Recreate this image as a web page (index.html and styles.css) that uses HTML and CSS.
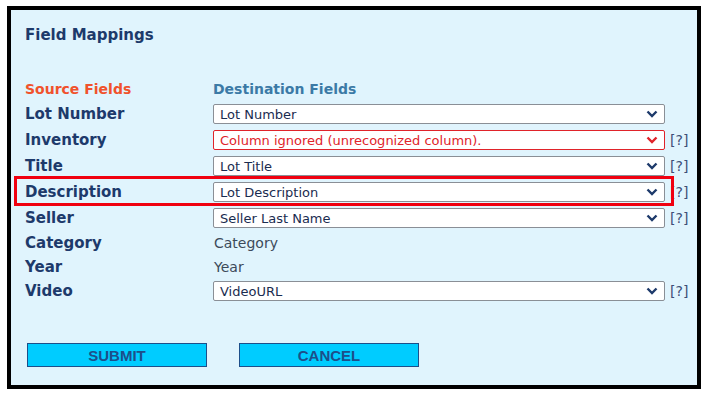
FILE: index.html
```html
<!DOCTYPE html>
<html lang="en">
<head>
    <meta charset="UTF-8">
    <title>Field Mappings</title>
    <link rel="stylesheet" href="styles.css">
</head>
<body>
    <div class="mapping-panel">
        <h2 class="panel-title">Field Mappings</h2>

        <div class="mapping-head">
            <span class="head-source">Source Fields</span>
            <span class="head-dest">Destination Fields</span>
        </div>

        <div class="mapping-row">
            <span class="field-name">Lot Number</span>
            <div class="field-select"><span>Lot Number</span><svg class="chevron" viewBox="0 0 12 8"><path d="M1.5 1.5 6 6l4.5-4.5"/></svg></div>
        </div>
        <div class="mapping-row">
            <span class="field-name">Inventory</span>
            <div class="field-select is-ignored"><span>Column ignored (unrecognized column).</span><svg class="chevron" viewBox="0 0 12 8"><path d="M1.5 1.5 6 6l4.5-4.5"/></svg></div>
            <span class="help">[?]</span>
        </div>
        <div class="mapping-row">
            <span class="field-name">Title</span>
            <div class="field-select"><span>Lot Title</span><svg class="chevron" viewBox="0 0 12 8"><path d="M1.5 1.5 6 6l4.5-4.5"/></svg></div>
            <span class="help">[?]</span>
        </div>
        <div class="mapping-row is-highlighted">
            <span class="field-name">Description</span>
            <div class="field-select"><span>Lot Description</span><svg class="chevron" viewBox="0 0 12 8"><path d="M1.5 1.5 6 6l4.5-4.5"/></svg></div>
            <span class="help">[?]</span>
        </div>
        <div class="mapping-row">
            <span class="field-name">Seller</span>
            <div class="field-select"><span>Seller Last Name</span><svg class="chevron" viewBox="0 0 12 8"><path d="M1.5 1.5 6 6l4.5-4.5"/></svg></div>
            <span class="help">[?]</span>
        </div>
        <div class="mapping-row is-plain">
            <span class="field-name">Category</span>
            <span class="field-text">Category</span>
        </div>
        <div class="mapping-row is-plain is-short">
            <span class="field-name">Year</span>
            <span class="field-text">Year</span>
        </div>
        <div class="mapping-row">
            <span class="field-name">Video</span>
            <div class="field-select"><span>VideoURL</span><svg class="chevron" viewBox="0 0 12 8"><path d="M1.5 1.5 6 6l4.5-4.5"/></svg></div>
            <span class="help">[?]</span>
        </div>

        <div class="panel-actions">
            <button class="action-btn">SUBMIT</button>
            <button class="action-btn">CANCEL</button>
        </div>
    </div>
</body>
</html>
```

FILE: styles.css
```css
body {
    margin: 0;
    background-color: #fff;
    font-family: "DejaVu Sans", Verdana, sans-serif;
}

.mapping-panel {
    box-sizing: border-box;
    width: 694px;
    height: 383px;
    margin: 6px 0 0 7px;
    padding: 0 0 0 14px;
    border: 4px solid #000;
    background-color: #e0f4fd;
}

.panel-title {
    margin: 0;
    padding-top: 16px;
    height: 34px;
    font-size: 15px;
    line-height: 18px;
    font-weight: bold;
    color: #1d3a6b;
}

.mapping-head {
    display: flex;
    align-items: center;
    height: 24px;
    margin-top: 17px;
    font-size: 14px;
    font-weight: bold;
}

.head-source {
    width: 188px;
    color: #f0522c;
}

.head-dest {
    color: #3b7aa6;
}

/* One source field and its destination */
.mapping-row {
    position: relative;
    display: flex;
    align-items: center;
    height: 26px;
}

.mapping-row.is-plain {
    height: 24px;
}

.mapping-row.is-short {
    height: 23px;
}

.field-name {
    width: 188px;
    flex: none;
    font-size: 15px;
    font-weight: bold;
    color: #1d3a6b;
}

.field-select {
    box-sizing: border-box;
    display: flex;
    align-items: center;
    justify-content: space-between;
    width: 452px;
    height: 20px;
    padding: 0 6px 0 6px;
    border: 1px solid #8a8f96;
    border-radius: 2px;
    background-color: #fff;
    font-size: 13px;
    color: #1a2c50;
}

.field-select.is-ignored {
    border-color: #e0232a;
    color: #e0232a;
}

.chevron {
    width: 12px;
    height: 8px;
    fill: none;
    stroke: #1d3a6b;
    stroke-width: 2.4;
}

.is-ignored .chevron {
    stroke: #e0232a;
}

.field-text {
    padding-left: 1px;
    font-size: 14px;
    color: #3c4a5a;
}

.help {
    margin-left: 5px;
    font-size: 14px;
    color: #3d4f78;
}

/* Red annotation box round the Description row */
.mapping-row.is-highlighted::after {
    content: "";
    position: absolute;
    left: -11px;
    top: -3px;
    width: 660px;
    height: 30px;
    box-sizing: border-box;
    border: 3px solid #f00010;
}

.panel-actions {
    display: flex;
    gap: 32px;
    margin-top: 39px;
    padding-left: 2px;
}

.action-btn {
    box-sizing: border-box;
    width: 180px;
    height: 24px;
    padding: 0;
    border: 1px solid #1d4f8a;
    background-color: #00ccff;
    font-family: "Liberation Sans", Arial, sans-serif;
    font-size: 15px;
    font-weight: bold;
    color: #1d4f8a;
}
```
